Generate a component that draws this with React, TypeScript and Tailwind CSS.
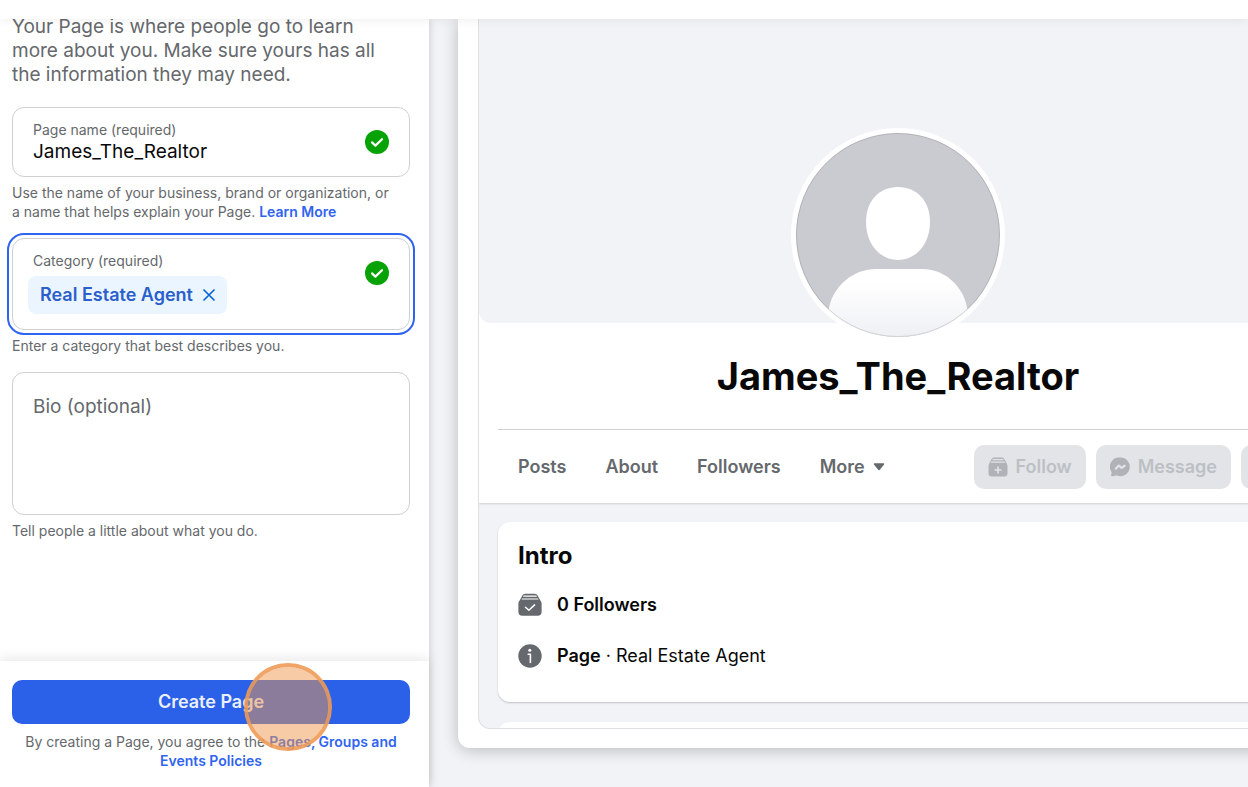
import type { ReactNode } from "react";

const NAV_ITEMS = ["Posts", "About", "Followers"];

function CheckBadge() {
  return (
    <svg viewBox="0 0 24 24" className="size-6 shrink-0" aria-hidden="true">
      <circle cx="12" cy="12" r="12" fill="#06a206" />
      <path d="M7 12.4l3.4 3.2 6.6-6.4" fill="none" stroke="#fff" strokeWidth="2.2" strokeLinecap="round" strokeLinejoin="round" />
    </svg>
  );
}

function FollowIcon() {
  return (
    <svg viewBox="0 0 20 20" className="size-5" aria-hidden="true">
      <path
        d="M6.200.5h7.600c1.400 0 2.300.9 2.800 2l1.700 3.300c.7 1.100 1.200 2.100 1.200 3.500v6.700a3.500 3.500 0 0 1-3.500 3.500H4A3.500 3.500 0 0 1 .5 16V9.300c0-1.400.5-2.400 1.200-3.500l1.700-3.300c.5-1.100 1.400-2 2.800-2z"
        fill="currentColor"
      />
      <path d="M5 2.700h10M3.600 5.200h12.800" stroke="#e3e4e8" strokeWidth="1.200" strokeLinecap="round" />
      <path d="M10 10.200v5.600M7.200 13h5.600" stroke="#e3e4e8" strokeWidth="1.700" strokeLinecap="round" />
    </svg>
  );
}

function MessengerIcon() {
  return (
    <svg viewBox="0 0 20 20" className="size-5" fill="currentColor" aria-hidden="true">
      <path d="M10.300.5a9.300 9.300 0 1 1-3.400 17.900c-.3-.1-.6-.1-.9 0l-2.300.7c-.9.400-2.100.3-2.400-.1-.4-.5 0-1.200.1-2.100 0-.7.400-1.200.1-1.900A9.300 9.300 0 0 1 10.300.5z" />
      <path d="M5.900 11.700l2.400-2.800c.3-.3.7-.3 1 0l1.900 1.700c.3.300.7.300 1 0l2.500-2" fill="none" stroke="#e3e4e8" strokeWidth="2.100" strokeLinecap="round" strokeLinejoin="round" />
    </svg>
  );
}

function FollowersIcon() {
  return (
    <svg viewBox="0 0 24 24" className="size-6 shrink-0" aria-hidden="true">
      <path
        d="M7.500.8h9c1.600 0 2.700.8 3.400 2.200l2.200 4c.9 1.200 1.500 2.300 1.500 3.900v7.800a4 4 0 0 1-4 4H4.400a4 4 0 0 1-4-4v-7.800c0-1.600.6-2.700 1.500-3.900l2.200-4C4.800 1.600 5.900.8 7.500.8z"
        fill="#65686c"
      />
      <path d="M5.800 3.200h12.400M4.200 6h15.600" stroke="#fff" strokeWidth="1.200" strokeLinecap="round" />
      <path d="M7.500 14.300l3.400 3 5.700-5.400" fill="none" stroke="#fff" strokeWidth="1.500" strokeLinecap="round" strokeLinejoin="round" />
    </svg>
  );
}

function InfoIcon() {
  return (
    <svg viewBox="0 0 24 24" className="size-6 shrink-0" aria-hidden="true">
      <circle cx="12" cy="12" r="11.700" fill="#65686c" />
      <circle cx="11.800" cy="6.200" r="1.500" fill="#fff" />
      <path d="M10.200 10.200h2.200v8.300" fill="none" stroke="#fff" strokeWidth="1.600" strokeLinecap="round" strokeLinejoin="round" />
    </svg>
  );
}

function Avatar() {
  return (
    <svg viewBox="0 0 204 204" className="size-[204px]" role="img" aria-label="Profile picture">
      <defs>
        <clipPath id="avatar-clip">
          <circle cx="102" cy="102" r="102" />
        </clipPath>
        <linearGradient id="avatar-body" x1="0" y1="0" x2="0" y2="1">
          <stop offset="0.2" stopColor="#fff" />
          <stop offset="1" stopColor="#eef0f4" />
        </linearGradient>
      </defs>
      <g clipPath="url(#avatar-clip)">
        <rect width="204" height="204" fill="#cacbd1" />
        <path d="M102 54c19 0 32 14 32 35 0 22-14 38-32 38S70 111 70 89c0-21 13-35 32-35z" fill="#fff" />
        <path d="M80 136h46c26 0 46 22 46 48v20H32v-20c0-26 22-48 48-48z" fill="url(#avatar-body)" />
      </g>
      <circle cx="102" cy="102" r="101.500" fill="none" stroke="#000" strokeOpacity="0.12" />
    </svg>
  );
}

function Hint({ children }: { children: ReactNode }) {
  return <p className="text-sm leading-[19px] text-[#65686c]">{children}</p>;
}

function TextLink({ children }: { children: ReactNode }) {
  return (
    <a href="#" className="font-semibold text-[#2f64f0]">
      {children}
    </a>
  );
}

function PageForm() {
  return (
    <aside className="relative z-10 flex w-[429px] shrink-0 flex-col bg-white shadow-[0_0_8px_rgba(0,0,0,0.18)]">
      <form className="flex min-h-0 flex-1 flex-col overflow-hidden pr-[19px] pl-3">
        <p className="-mt-1 text-[19px] leading-6 text-[#65686c]">
          Your Page is where people go to learn
          <br />
          more about you. Make sure yours has all
          <br />
          the information they may need.
        </p>

        {/* Page name */}
        <label className="mt-5 mb-1.5 flex h-[70px] items-center justify-between rounded-xl border border-[#ced0d4] px-5">
          <span className="flex min-w-0 flex-1 flex-col">
            <span className="text-sm text-[#65686c]">Page name (required)</span>
            <input type="text" defaultValue="James_The_Realtor" className="w-full text-[19px] leading-6 text-[#080809] outline-none" />
          </span>
          <CheckBadge />
        </label>
        <Hint>
          Use the name of your business, brand or organization, or
          <br />a name that helps explain your Page. <TextLink>Learn More</TextLink>
        </Hint>

        {/* Category */}
        <div className="mt-[17px] mb-1.5 flex h-[92px] justify-between rounded-xl border border-[#ced0d4] pt-3 pr-5 pl-[15px] outline-2 outline-offset-[3px] outline-[#2f64f0]">
          <div className="min-w-0 flex-1">
            <label htmlFor="category" className="ml-[5px] block text-sm text-[#65686c]">
              Category (required)
            </label>
            <div className="mt-[5px] flex">
              <span className="flex h-[38px] shrink-0 items-center gap-2.5 rounded-lg bg-[#ebf5ff] px-3 text-lg font-semibold text-[#2a5fcc]">
                Real Estate Agent
                <button type="button" aria-label="Remove Real Estate Agent">
                  <svg viewBox="0 0 12 12" className="size-3" aria-hidden="true">
                    <path d="M1 1l10 10M11 1L1 11" stroke="#0a66d8" strokeWidth="1.700" strokeLinecap="round" />
                  </svg>
                </button>
              </span>
              <input id="category" type="text" className="min-w-0 flex-1 outline-none" />
            </div>
          </div>
          <div className="pt-2.5">
            <CheckBadge />
          </div>
        </div>
        <Hint>Enter a category that best describes you.</Hint>

        {/* Bio */}
        <label className="mt-[17px] mb-1.5 flex h-[143px] flex-col rounded-xl border border-[#ced0d4] px-5 pt-[22px]">
          <span className="text-[19px] leading-6 text-[#65686c]">Bio (optional)</span>
          <textarea className="w-full flex-1 resize-none outline-none" />
        </label>
        <Hint>Tell people a little about what you do.</Hint>
      </form>

      <div className="pt-[19px] pr-[19px] pb-[17px] pl-3 text-center shadow-[0_-2px_12px_rgba(0,0,0,0.1)]">
        <button type="button" className="mb-2 h-11 w-full rounded-[10px] bg-[#2a61e8] text-lg font-semibold text-[#ebeffc]">
          Create Page
        </button>
        <Hint>
          By creating a Page, you agree to the <TextLink>Pages, Groups and Events Policies</TextLink>
        </Hint>
      </div>
    </aside>
  );
}

function PagePreview() {
  return (
    <main className="min-w-0 flex-1 overflow-hidden bg-[#f2f3f7] pb-[39px] pl-[29px]">
      <div className="flex h-full min-w-[880px] flex-col rounded-b-xl bg-white px-5 pb-[19px] shadow-[0_2px_16px_rgba(0,0,0,0.24)]">
        <div className="flex min-h-0 flex-1 flex-col overflow-hidden rounded-b-xl border-x border-b border-[#dddfe3] bg-[#f2f3f7]">
          <div className="shrink-0 bg-white px-[19px] shadow-[0_1px_2px_rgba(0,0,0,0.15)]">
            <div className="-mx-[19px] h-[304px] rounded-b-xl bg-[#f2f3f7]" />
            <div className="-mt-[195px] flex flex-col items-center">
              <div className="rounded-full bg-white p-[5px]">
                <Avatar />
              </div>
              <h1 className="mt-2.5 text-[38px] leading-[48px] font-bold text-[#080809]">James_The_Realtor</h1>
            </div>

            <div className="mt-[29px] flex h-[74px] items-center justify-between border-t border-[#ced0d4]">
              <nav className="flex gap-[39px] pl-5 text-lg font-semibold text-[#65686c]">
                {NAV_ITEMS.map((item) => (
                  <a key={item} href="#">
                    {item}
                  </a>
                ))}
                <button type="button" className="flex items-center gap-2">
                  More
                  <svg viewBox="0 0 12 8" className="h-2 w-3" aria-hidden="true">
                    <path d="M1.500 1h9L6 6.500z" fill="currentColor" stroke="currentColor" strokeWidth="1.500" strokeLinejoin="round" />
                  </svg>
                </button>
              </nav>
              <div className="flex gap-2.5 text-lg font-semibold text-[#bcc0c4]">
                <button type="button" disabled className="flex h-11 items-center gap-2 rounded-[10px] bg-[#e3e4e8] px-3.5">
                  <span className="text-[#b0b2b7]">
                    <FollowIcon />
                  </span>
                  Follow
                </button>
                <button type="button" disabled className="flex h-11 items-center gap-2 rounded-[10px] bg-[#e3e4e8] px-3.5">
                  <span className="text-[#b0b2b7]">
                    <MessengerIcon />
                  </span>
                  Message
                </button>
                <button type="button" disabled aria-label="More actions" className="h-11 w-[57px] rounded-[10px] bg-[#e3e4e8]" />
              </div>
            </div>
          </div>

          {/* Intro */}
          <div className="flex shrink-0 flex-col gap-5 px-[19px] pt-[19px]">
            <section className="h-[180px] rounded-xl bg-white px-5 pt-5 text-[#080809] shadow-[0_1px_2px_rgba(0,0,0,0.2)]">
              <h2 className="text-2xl leading-7 font-bold">Intro</h2>
              <ul className="mt-[23px] flex flex-col gap-[27px] text-lg leading-6">
                <li className="flex items-center gap-[15px] font-semibold">
                  <FollowersIcon />0 Followers
                </li>
                <li className="flex items-center gap-[15px]">
                  <InfoIcon />
                  <span>
                    <strong className="font-semibold">Page</strong> · Real Estate Agent
                  </span>
                </li>
              </ul>
            </section>
            <section className="h-20 rounded-xl bg-white" />
          </div>
        </div>
      </div>
    </main>
  );
}

export default function App() {
  return (
    <div className="relative flex h-screen flex-col overflow-hidden bg-white font-['Inter','Liberation_Sans',sans-serif]">
      <header className="relative z-20 h-[19px] shrink-0 bg-white shadow-[0_0_12px_rgba(0,0,0,0.08)]" />
      <div className="flex min-h-0 flex-1">
        <PageForm />
        <PagePreview />
      </div>

      {/* Click marker */}
      <div className="pointer-events-none absolute top-[663px] left-[244px] z-30 size-[88px] rounded-full border-4 border-[#ee9a55]/90 bg-[#ee974e]/50 bg-clip-padding" />
    </div>
  );
}
